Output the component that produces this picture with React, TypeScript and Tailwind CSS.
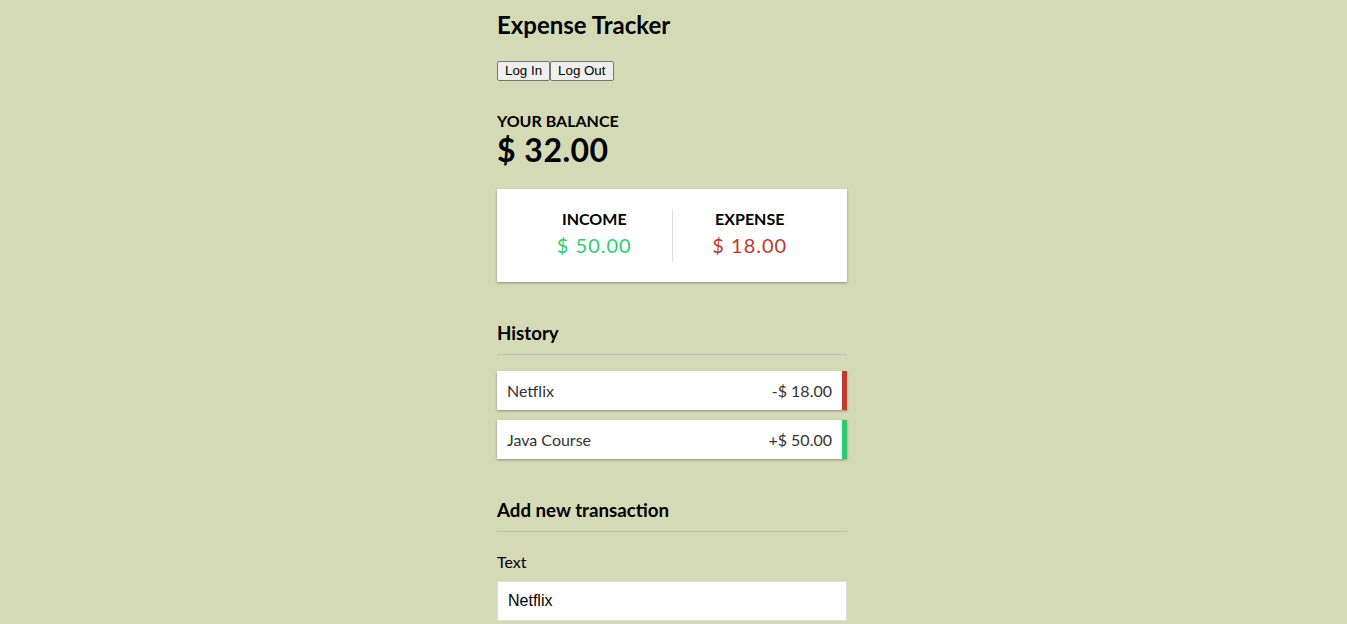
import React, { useState } from 'react';

interface Transaction {
  id: number;
  text: string;
  amount: number;
}

const initialTransactions: Transaction[] = [
  { id: 1, text: 'Netflix', amount: -18 },
  { id: 2, text: 'Java Course', amount: 50 },
];

const shadow = 'shadow-[0_1px_3px_rgba(0,0,0,0.12),0_1px_2px_rgba(0,0,0,0.24)]';

export default function App() {
  const [transactions] = useState<Transaction[]>(initialTransactions);
  const [text, setText] = useState('Netflix');

  const amounts = transactions.map((t) => t.amount);
  const total = amounts.reduce((acc, a) => acc + a, 0).toFixed(2);
  const income = amounts.filter((a) => a > 0).reduce((acc, a) => acc + a, 0).toFixed(2);
  const expense = Math.abs(amounts.filter((a) => a < 0).reduce((acc, a) => acc + a, 0)).toFixed(2);

  return (
    <div className="h-screen overflow-hidden bg-[#d5dab6] pr-[3px] font-['Lato','Noto_Sans',sans-serif] leading-[normal] text-black">
      <div className="mx-auto w-[350px] pt-[10px]">
        <h2 className="text-[24px] font-bold">Expense Tracker</h2>

        {/* Auth buttons */}
        <div className="mt-[22px] flex">
          <button className="h-[20px] rounded-[2px] border border-[#767676] bg-[#efefef] px-[7px] font-['Liberation_Sans',Arial,sans-serif] text-[13.333px] leading-none text-black">
            Log In
          </button>
          <button className="h-[20px] rounded-[2px] border border-[#767676] bg-[#efefef] px-[7px] font-['Liberation_Sans',Arial,sans-serif] text-[13.333px] leading-none text-black">
            Log Out
          </button>
        </div>

        {/* Balance */}
        <h4 className="mt-[30px] text-[16px] font-bold uppercase">Your Balance</h4>
        <h1 className="text-[32px] font-bold tracking-[0.5px]">$ {total}</h1>

        <div className={`my-[20px] flex bg-white p-[20px] ${shadow}`}>
          <div className="flex-1 border-r border-[#dedede] text-center">
            <h4 className="text-[16px] font-bold uppercase">Income</h4>
            <p className="my-[5px] text-[20px] tracking-[1px] text-[#2ecc71]">$ {income}</p>
          </div>
          <div className="flex-1 text-center">
            <h4 className="text-[16px] font-bold uppercase">Expense</h4>
            <p className="my-[5px] text-[20px] tracking-[1px] text-[#c0392b]">$ {expense}</p>
          </div>
        </div>

        {/* History */}
        <h3 className="mt-[40px] border-b border-[#bbb] pb-[10px] text-[18.72px] font-bold">History</h3>
        <ul className="mt-[16px] mb-[40px] flex flex-col gap-[10px]">
          {transactions.map((t) => (
            <li
              key={t.id}
              className={`flex justify-between bg-white p-[10px] text-[16px] text-[#333] ${shadow} border-r-[5px] ${
                t.amount < 0 ? 'border-[#c0392b]' : 'border-[#2ecc71]'
              }`}
            >
              {t.text}
              <span>
                {t.amount < 0 ? '-' : '+'}$ {Math.abs(t.amount).toFixed(2)}
              </span>
            </li>
          ))}
        </ul>

        {/* Add new transaction */}
        <h3 className="border-b border-[#bbb] pb-[10px] text-[18.72px] font-bold">Add new transaction</h3>
        <form className="mt-[10px]">
          <div>
            <label htmlFor="text" className="my-[10px] inline-block text-[16px]">
              Text
            </label>
            <input
              id="text"
              type="text"
              value={text}
              onChange={(e) => setText(e.target.value)}
              placeholder="Enter text..."
              className="block w-full rounded-[2px] border border-[#dedede] bg-white p-[10px] font-['Liberation_Sans',Arial,sans-serif] text-[16px] leading-[normal] text-black outline-none"
            />
          </div>
        </form>
      </div>
    </div>
  );
}
